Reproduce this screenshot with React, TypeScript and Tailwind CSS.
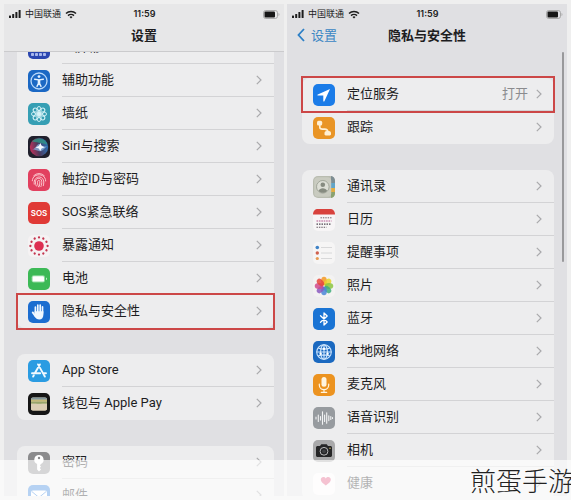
import type { ReactNode } from "react";
import clsx from "clsx";

type Item = {
  label: string;
  icon: ReactNode;
  value?: string;
  marked?: boolean;
};

const petals = [0, 45, 90, 135, 180, 225, 270, 315];
const dots = [0, 30, 60, 90, 120, 150, 180, 210, 240, 270, 300, 330];
const photoColors = ["#f59a23", "#e9d32c", "#8cc63f", "#3fae7c", "#4a86d8", "#8a5bc0", "#d04a8c", "#e6483c"];

function Tile({ fill, children }: { fill: string; children?: ReactNode }) {
  return (
    <svg viewBox="0 0 22 22" className="size-[22px] shrink-0" aria-hidden="true">
      <rect width="22" height="22" rx="5" fill={fill} />
      {children}
    </svg>
  );
}

const HomeScreenIcon = () => (
  <Tile fill="#2b46b0">
    <g fill="#a9b8ee">
      {[4, 8, 12, 16].map((x) =>
        [4, 8, 12, 17].map((y) => <rect key={`${x}-${y}`} x={x - 1} y={y - 1} width="3" height="3" rx=".8" />)
      )}
    </g>
  </Tile>
);

const AccessibilityIcon = () => (
  <Tile fill="#1b68c4">
    <circle cx="11" cy="11" r="8" fill="none" stroke="#b9d9fa" strokeWidth="1.3" />
    <circle cx="11" cy="6.6" r="1.4" fill="#e3f1ff" />
    <path d="M6.6 9.2 11 9.9l4.4-.7M11 9.9v3M11 12.4l-2 4M11 12.4l2 4" fill="none" stroke="#e3f1ff" strokeWidth="1.4" strokeLinecap="round" />
    <path d="M9.7 9.8h2.6v3.4H9.7z" fill="#e3f1ff" />
  </Tile>
);

const WallpaperIcon = () => (
  <Tile fill="#369fb4">
    <g fill="none" stroke="#d8f4f8" strokeWidth="1">
      {petals.map((a) => (
        <ellipse key={a} cx="11" cy="6.8" rx="2.2" ry="3.3" transform={`rotate(${a} 11 11)`} />
      ))}
    </g>
    <circle cx="11" cy="11" r="1.5" fill="#d8f4f8" />
  </Tile>
);

const SiriIcon = () => (
  <Tile fill="#20202c">
    <defs>
      <linearGradient id="siri" x1="0" y1=".6" x2="1" y2=".4">
        <stop offset="0" stopColor="#c2305a" />
        <stop offset=".45" stopColor="#4d3a5c" />
        <stop offset="1" stopColor="#2b72b8" />
      </linearGradient>
    </defs>
    <circle cx="11" cy="11" r="9.2" fill="url(#siri)" />
    <path d="M4 5.500c4-5 13-4 15.500 3-4-1-8-2-15.500-3z" fill="#2f9a86" opacity=".75" />
    <path d="M4 13c3 1 5-5 7-5s4 4 8 2c-3 3-5 6-8 5s-4-1-7-2z" fill="#8bbbe8" opacity=".7" />
    <path d="m12.500 7 1 2.800 3.200 1.500-3.200 1.200-1.200 2.500-1.500-2.500-3.300-1.100 3.300-1.500z" fill="#f4f7ff" />
  </Tile>
);

const TouchIdIcon = () => (
  <Tile fill="#e2405f">
    <g fill="none" stroke="#fbc3cb" strokeWidth="1" strokeLinecap="round">
      <path d="M5.6 6.8a7.2 7.2 0 0 1 10.8 0" />
      <path d="M4.3 11.8C4.3 3.6 17.7 3.6 17.7 12" />
      <path d="M6.2 15.2c-1.4-8.8 9.3-9.6 9.6-2.2.1 1.5-.2 2.6-.5 3.7" />
      <path d="M8.3 17c-1.1-2-1-4-.6-5.6.9-3 5.6-2.8 6 .8.2 2-.1 3.7-.8 5.4" />
      <path d="M10.6 17.9c-1-2-1.4-4-.9-5.8.5-1.2 2-1 2.1.3.1 1.9-.1 3.3-.4 4.8" />
    </g>
  </Tile>
);

const SosIcon = () => (
  <Tile fill="#e03a36">
    <text x="11" y="14" textAnchor="middle" fill="#fff" fontSize="8" fontWeight="600" fontFamily="Inter, sans-serif">
      SOS
    </text>
  </Tile>
);

const ExposureIcon = () => (
  <Tile fill="#f5f2f3">
    <circle cx="11" cy="11" r="4.8" fill="#dd2f52" />
    <g fill="#c4354f">
      {dots.map((a) => (
        <circle key={a} cx="11" cy="2.400" r="1.150" transform={`rotate(${a} 11 11)`} />
      ))}
    </g>
  </Tile>
);

const BatteryIcon = () => (
  <Tile fill="#3cb956">
    <rect x="3.6" y="7.2" width="13.4" height="7.4" rx="2" fill="#8edb9e" />
    <rect x="4.6" y="8.2" width="11.4" height="5.4" rx="1.2" fill="#fff" />
    <path d="M18 9.6c1.3.4 1.3 2.2 0 2.6z" fill="#c9f0d0" />
  </Tile>
);

const PrivacyIcon = () => (
  <Tile fill="#1c6dd0">
    <g stroke="#f1f7ff" strokeLinecap="round" fill="none">
      <path d="M7.4 12V6.2M9.8 11V4.2M12.2 11V4M14.5 12V5.9" strokeWidth="1.7" />
      <path d="m4.7 11.4 2.9 4" strokeWidth="1.8" />
    </g>
    <path d="M6.6 10.2h8.8v3c0 3.2-1.5 5.4-4.1 5.4-2.2 0-3.5-1.2-4.7-3.3z" fill="#f1f7ff" />
  </Tile>
);

const AppStoreIcon = () => (
  <Tile fill="#2b9ce2">
    <g stroke="#f2faff" strokeWidth="1.9" strokeLinecap="round" fill="none">
      <path d="M11.9 4.4 6.9 13M10 4.4l5.8 10.2M4 13.2h8.2M15 13.2h3M5.8 15.4l-.7 1.2M16.2 15.4l.7 1.2" />
    </g>
  </Tile>
);

const WalletIcon = () => (
  <Tile fill="#161616">
    <rect x="3" y="4.500" width="16" height="13" rx="1.800" fill="#d9cfb2" />
    <path d="M3 6.700C3 5.300 3.800 4.500 5 4.500h12c1.200 0 2 .8 2 2.200z" fill="#82969b" />
    <path d="M3 6.700h16v2H3z" fill="#c5b877" />
    <path d="M3 8.700h16v2.100H3z" fill="#98a46b" />
    <path d="M3 10.800h5.400c.6 1.800 4.600 1.800 5.200 0H19v5c0 1-.8 1.700-1.800 1.700H4.800c-1 0-1.800-.7-1.800-1.700z" fill="#dccdb4" />
  </Tile>
);

const KeyIcon = () => (
  <Tile fill="#8b8b8d">
    <path d="M11 3a4.700 4.700 0 0 0-1.900 9v5.400l1.900 2 2-2-1.200-1.500 1.200-1.400-1.100-1.300 1.100-1.300A4.700 4.700 0 0 0 11 3z" fill="#fff" />
    <circle cx="11" cy="6" r="1.200" fill="#8b8b8d" />
  </Tile>
);

const MailIcon = () => (
  <Tile fill="#2f7fdc">
    <rect x="3" y="5.500" width="16" height="11" rx="2" fill="#fff" />
    <path d="m3.800 6.500 7.200 6 7.200-6M4 16l5-5M18 16l-5-5" fill="none" stroke="#2f7fdc" strokeWidth="1" />
  </Tile>
);

const LocationIcon = () => (
  <Tile fill="#1b7ce8">
    <path d="M17 5 4.800 10.600c-.6.300-.5 1 .2 1h5.300v5.400c0 .7.800.8 1.100.2z" fill="#fff" />
  </Tile>
);

const TrackingIcon = () => (
  <Tile fill="#e99526">
    <path d="M6.800 7v3.200c0 1.500 1 1.900 2.600 1.900h2.200c1.800 0 3.200.9 3.200 2.900" fill="none" stroke="#fff0d4" strokeWidth="1.600" />
    <rect x="4" y="3.800" width="5.200" height="4.800" rx="1.600" fill="#fff0d4" />
    <path d="M11.500 16c0-1.300.9-2 2.100-2h2.300c1.200 0 2.100.7 2.100 2v1.300c0 .7-.5 1.200-1.200 1.200h-4.100c-.7 0-1.200-.5-1.200-1.200z" fill="#fff0d4" />
  </Tile>
);

const ContactsIcon = () => (
  <Tile fill="#b9bcb0">
    <path d="M18 0c2.500.3 4 2 4 5v2.500h-4z" fill="#7d8d92" />
    <path d="M18 7h4v5h-4z" fill="#62a5c8" />
    <path d="M18 12h4v4h-4z" fill="#e3ad43" />
    <path d="M18 16h4v1c0 3-1.500 4.700-4 5z" fill="#8ba270" />
    <rect x="1.200" y="1.200" width="17" height="19.600" rx="3.600" fill="#c9cbc0" />
    <circle cx="9.800" cy="10.800" r="6.300" fill="#dddfd6" stroke="#969a8e" strokeWidth=".8" />
    <circle cx="9.800" cy="8.800" r="2.300" fill="#868b80" />
    <path d="M5.500 14.700c1.400-3.400 7.200-3.400 8.600 0-2.200 2.700-6.400 2.700-8.600 0z" fill="#868b80" />
  </Tile>
);

const CalendarIcon = () => (
  <Tile fill="#f7f5f6">
    <path d="M0 5.500C0 2 2 0 5 0h12c3 0 5 2 5 5.500z" fill="#d8423d" />
    <path d="M7.500 8.800h11" stroke="#73646d" strokeWidth="1" strokeDasharray="1.400 1" />
    <path d="M3.500 12h15" stroke="#b2568e" strokeWidth="1.200" strokeDasharray="1.600 .8" />
    <path d="M3.500 15.200h15" stroke="#4d4750" strokeWidth="1.200" strokeDasharray="1.500 1" />
    <path d="M3.500 18.300h10" stroke="#62585f" strokeWidth="1.100" strokeDasharray="1.400 1" />
  </Tile>
);

const RemindersIcon = () => (
  <Tile fill="#f6f5f5">
    <path d="M8 5.500h11M8 11h11M8 16.500h11" stroke="#d0d0d2" strokeWidth=".8" />
    <circle cx="4.300" cy="5.500" r="1.800" fill="#3f82c6" />
    <circle cx="4.300" cy="11" r="1.700" fill="#cf604e" />
    <circle cx="4.300" cy="16.500" r="1.600" fill="#e69b52" />
  </Tile>
);

const PhotosIcon = () => (
  <Tile fill="#f3f2f2">
    {petals.map((a, i) => (
      <ellipse key={a} cx="11" cy="6" rx="2.900" ry="4.300" fill={photoColors[i]} opacity=".85" transform={`rotate(${a} 11 11)`} />
    ))}
  </Tile>
);

const BluetoothIcon = () => (
  <Tile fill="#1a74d4">
    <path d="m7.500 7.800 6.700 6.200-3.200 3V5l3.200 3-6.700 6.200" fill="none" stroke="#fff" strokeWidth="1.300" strokeLinejoin="round" strokeLinecap="round" />
  </Tile>
);

const NetworkIcon = () => (
  <Tile fill="#1b69c0">
    <g fill="none" stroke="#cfe6fd" strokeWidth="1.100">
      <circle cx="11" cy="11" r="7.300" />
      <ellipse cx="11" cy="11" rx="3.400" ry="7.300" />
      <path d="M11 3.700v14.600M3.700 11h14.600M5.200 6.900c3 1.600 8.600 1.600 11.600 0M5.200 15.100c3-1.600 8.600-1.600 11.600 0" />
    </g>
    <g fill="#fff">
      <circle cx="11" cy="7.800" r="1.200" />
      <circle cx="7.600" cy="12.800" r="1.200" />
      <circle cx="14.600" cy="12.800" r="1.200" />
    </g>
  </Tile>
);

const MicIcon = () => (
  <Tile fill="#ec9320">
    <rect x="8.500" y="3" width="5" height="9.800" rx="2.500" fill="#fff4df" />
    <path d="M6.300 10v1a4.700 4.700 0 0 0 9.400 0v-1M11 15.700v2.600M8.300 18.400h5.400" fill="none" stroke="#fff4df" strokeWidth="1.200" strokeLinecap="round" />
  </Tile>
);

const SpeechIcon = () => (
  <Tile fill="#979b9f">
    <path d="M3 10v2M5.300 8v6.400M7.500 9.500v3.400M9.500 4.800v12.400M11.600 8v6.400M13.700 5.800v10.400M15.800 8.800v4.800M17.800 9.500v3M19.500 10.500v1" stroke="#f2f3f4" strokeWidth="1.100" strokeLinecap="round" />
  </Tile>
);

const CameraIcon = () => (
  <Tile fill="#a9a9aa">
    <path d="M3 7.500C3 6.600 3.700 6 4.600 6H7l1.300-1.800h5.400L15 6h2.400c.9 0 1.600.6 1.600 1.500v8c0 .9-.7 1.500-1.600 1.500H4.600c-.9 0-1.600-.6-1.600-1.500z" fill="#252526" />
    <circle cx="11" cy="11.300" r="3.900" fill="#252526" stroke="#b9b9ba" strokeWidth="1" />
    <circle cx="11" cy="11.300" r="1.900" fill="#3f4043" />
    <circle cx="17" cy="8.200" r=".7" fill="#d9c46a" />
  </Tile>
);

const HealthIcon = () => (
  <Tile fill="#fbf9fa">
    <path d="M12.800 12.600C9.500 10.200 7.800 8.700 7.800 6.600c0-3 3.600-3.600 5-1.200 1.400-2.400 5-1.800 5 1.200 0 2.100-1.700 3.600-5 6z" fill="#e2527c" />
  </Tile>
);

const Chevron = () => (
  <svg viewBox="0 0 6 10" className="h-[10px] w-[6px] shrink-0" aria-hidden="true">
    <path d="m.8.8 4.200 4.200L.8 9.200" fill="none" stroke="#a9a9ac" strokeWidth="1.200" />
  </svg>
);

function StatusBar() {
  return (
    <div className="grid h-4 grid-cols-3 items-center pt-1 pr-1 pl-[5px] text-[9px] leading-3 text-[#222]">
      <div className="flex items-center gap-1">
        <svg viewBox="0 0 12 8" className="h-2 w-3 shrink-0" fill="#1c1c1c" aria-hidden="true">
          <rect x="0" y="5.500" width="2" height="2.500" rx=".5" />
          <rect x="3.200" y="4" width="2" height="4" rx=".5" />
          <rect x="6.400" y="2" width="2" height="6" rx=".5" />
          <rect x="9.600" y="0" width="2" height="8" rx=".5" />
        </svg>
        <span className="whitespace-nowrap">中国联通</span>
        <svg viewBox="0 0 12 9" className="h-[9px] w-3 shrink-0" aria-hidden="true">
          <path d="M1 3.500a7.200 7.200 0 0 1 10 0M3 5.600a4.400 4.400 0 0 1 6 0" fill="none" stroke="#1c1c1c" strokeWidth="1.500" />
          <path d="M4.500 7a2.200 2.200 0 0 1 3 0L6 8.600z" fill="#1c1c1c" />
        </svg>
      </div>
      <span className="text-center font-semibold">11:59</span>
      <svg viewBox="0 0 17 9" className="h-[9px] w-[17px] justify-self-end" aria-hidden="true">
        <rect x=".5" y=".5" width="14" height="8" rx="2.200" fill="none" stroke="#9a9a9a" strokeWidth=".8" />
        <rect x="1.500" y="1.500" width="10.500" height="6" rx="1" fill="#161616" />
        <path d="M15.600 3c1 .4 1 2.600 0 3z" fill="#9a9a9a" />
      </svg>
    </div>
  );
}

function Row({ label, icon, value, marked }: Item) {
  return (
    <li className="group relative">
      <button type="button" className="flex h-[33px] w-full items-center gap-3 pl-[11px] text-left">
        {icon}
        <span className="flex h-full min-w-0 flex-1 items-center gap-2 border-b border-[#d3d3d5] pr-3 group-last:border-transparent">
          <span className="flex-1 whitespace-nowrap text-[#1d1d1f]">{label}</span>
          {value && <span className="text-[#8b8b8e]">{value}</span>}
          <Chevron />
        </span>
      </button>
      {marked && <span className="pointer-events-none absolute -inset-x-px -inset-y-[2px] border-2 border-[#cc4747]" />}
    </li>
  );
}

function Group({ items, className }: { items: Item[]; className?: string }) {
  return (
    <ul className={clsx("shrink-0 rounded-lg bg-[#ededee] font-['Roboto','Noto_Sans_CJK_SC',sans-serif]", className)}>
      {items.map((item) => (
        <Row key={item.label} {...item} />
      ))}
    </ul>
  );
}

const generalItems: Item[] = [
  { label: "主屏幕", icon: <HomeScreenIcon /> },
  { label: "辅助功能", icon: <AccessibilityIcon /> },
  { label: "墙纸", icon: <WallpaperIcon /> },
  { label: "Siri与搜索", icon: <SiriIcon /> },
  { label: "触控ID与密码", icon: <TouchIdIcon /> },
  { label: "SOS紧急联络", icon: <SosIcon /> },
  { label: "暴露通知", icon: <ExposureIcon /> },
  { label: "电池", icon: <BatteryIcon /> },
  { label: "隐私与安全性", icon: <PrivacyIcon />, marked: true },
];

const storeItems: Item[] = [
  { label: "App Store", icon: <AppStoreIcon /> },
  { label: "钱包与 Apple Pay", icon: <WalletIcon /> },
];

const accountItems: Item[] = [
  { label: "密码", icon: <KeyIcon /> },
  { label: "邮件", icon: <MailIcon /> },
];

const locationItems: Item[] = [
  { label: "定位服务", icon: <LocationIcon />, value: "打开", marked: true },
  { label: "跟踪", icon: <TrackingIcon /> },
];

const permissionItems: Item[] = [
  { label: "通讯录", icon: <ContactsIcon /> },
  { label: "日历", icon: <CalendarIcon /> },
  { label: "提醒事项", icon: <RemindersIcon /> },
  { label: "照片", icon: <PhotosIcon /> },
  { label: "蓝牙", icon: <BluetoothIcon /> },
  { label: "本地网络", icon: <NetworkIcon /> },
  { label: "麦克风", icon: <MicIcon /> },
  { label: "语音识别", icon: <SpeechIcon /> },
  { label: "相机", icon: <CameraIcon /> },
  { label: "健康", icon: <HealthIcon /> },
];

export default function App() {
  return (
    <div className="relative h-screen overflow-hidden bg-[#efefef] p-1 font-['Inter','Noto_Sans_CJK_SC',sans-serif] text-[13px] leading-5">
      <main className="grid h-full grid-cols-2 gap-[3px]">
        <section className="flex min-h-0 flex-col overflow-hidden bg-[#e0e0e3]">
          <header className="h-12 shrink-0 border-b border-[#cbcbcd] bg-[#e7e7e8]">
            <StatusBar />
            <h1 className="pt-[5px] text-center font-bold text-[#1d1d1f]">设置</h1>
          </header>
          <div className="flex min-h-0 flex-1 flex-col gap-[26px] overflow-hidden pr-[10px] pl-[13px]">
            <Group items={generalItems} className="-mt-[21px]" />
            <Group items={storeItems} />
            <Group items={accountItems} />
          </div>
        </section>

        <section className="relative flex min-h-0 flex-col overflow-hidden bg-[#e0e0e3]">
          <header className="h-12 shrink-0">
            <StatusBar />
            <div className="grid grid-cols-[1fr_auto_1fr] items-center pt-[5px]">
              <button type="button" className="flex items-center gap-[6px] pl-[10px] text-[#3b86c4]">
                <svg viewBox="0 0 8 14" className="h-[14px] w-2" aria-hidden="true">
                  <path d="M7 1 1.500 7 7 13" fill="none" stroke="#2c7fc6" strokeWidth="1.800" />
                </svg>
                设置
              </button>
              <h1 className="font-bold text-[#1d1d1f]">隐私与安全性</h1>
            </div>
          </header>
          <div className="flex min-h-0 flex-1 flex-col gap-[26px] overflow-hidden pt-[26px] pr-[13px] pl-[15px]">
            <Group items={locationItems} />
            <Group items={permissionItems} />
          </div>
          <span className="absolute top-12 right-[3px] h-[210px] w-[2px] rounded-full bg-[#99999b]" />
        </section>
      </main>

      <footer className="absolute inset-x-0 bottom-0 flex h-10 items-center justify-end bg-white/65">
        <span className="-mr-[3px] font-['Noto_Sans_CJK_SC',sans-serif] text-[26px] leading-10 font-light whitespace-nowrap text-[#222]">
          煎蛋手游
        </span>
      </footer>
    </div>
  );
}
